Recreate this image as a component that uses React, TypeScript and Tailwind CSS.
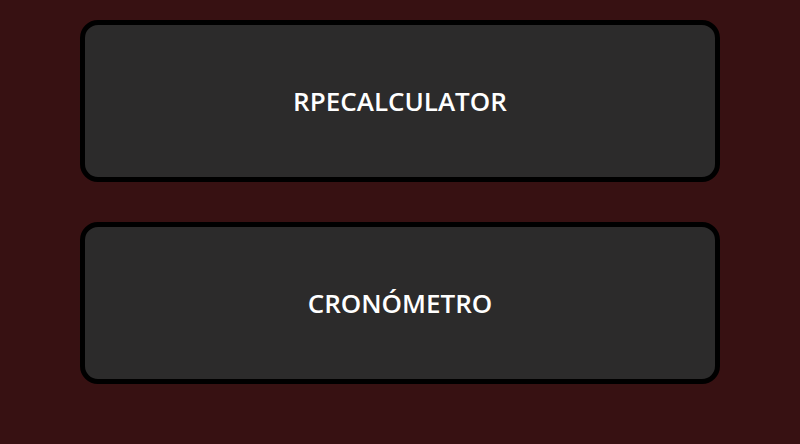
import React from "react";

export default function App() {
  const items = ["RPECALCULATOR", "CRONÓMETRO"];
  return (
    <div className="w-[800px] h-[444px] bg-[#371112] flex flex-col items-center pt-5 gap-10" style={{ fontFamily: '"Open Sans", sans-serif' }}>
      {items.map((t) => (
        <button
          key={t}
          className="w-[640px] h-[162px] border-[5px] border-black rounded-[18px] bg-[#2c2b2b] flex items-center justify-center text-white text-[26px] font-semibold"
        >
          {t}
        </button>
      ))}
    </div>
  );
}
